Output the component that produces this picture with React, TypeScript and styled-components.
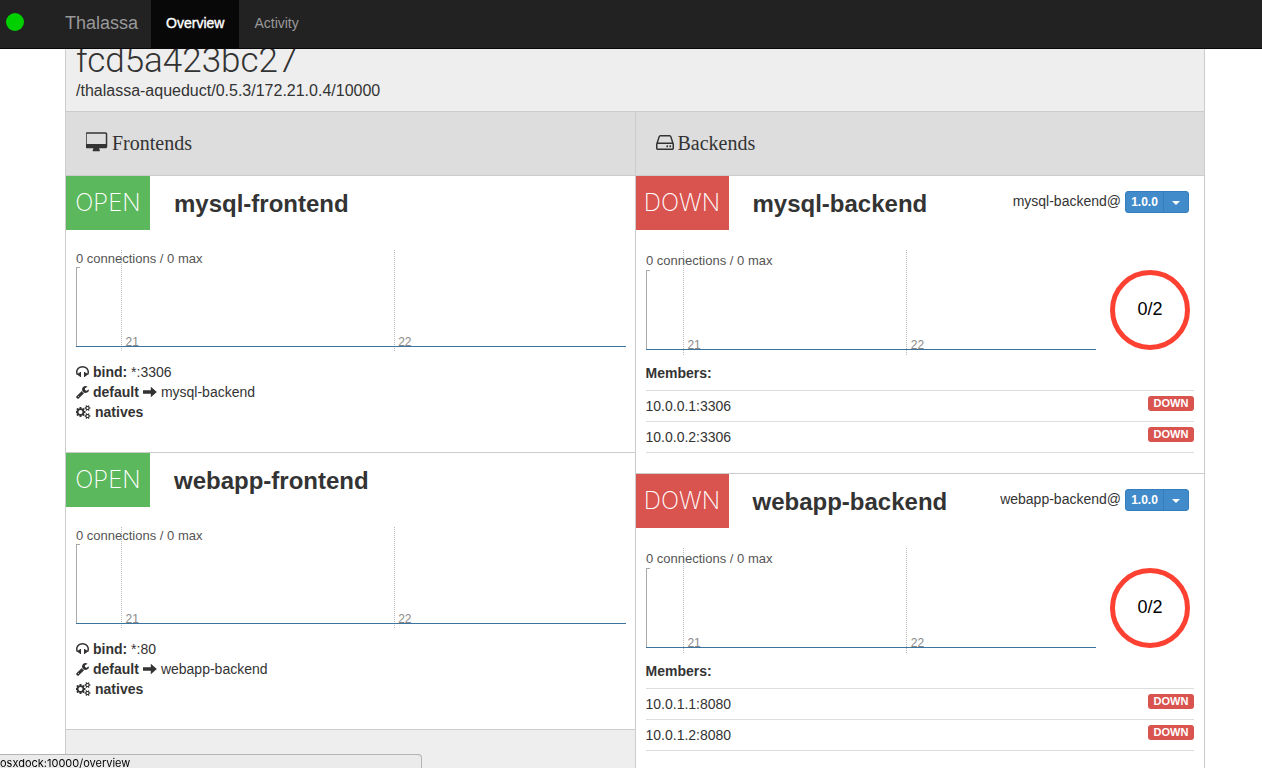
import React from 'react';
import styled, { createGlobalStyle } from 'styled-components';

const sans = '"Liberation Sans", Arial, sans-serif';
const light = 'Roboto, "Liberation Sans", sans-serif';

const GlobalStyle = createGlobalStyle`
  *, *::before, *::after { box-sizing: border-box; }
  html, body { margin: 0; height: 100%; overflow: hidden; }
  body { background: #fff; color: #333; font: 14px/20px ${sans}; }
  h1, h2, h3, h4, p, ul { margin: 0; padding: 0; font-weight: inherit; }
`;

const Navbar = styled.nav`
  position: fixed;
  inset: 0 0 auto 0;
  z-index: 2;
  display: flex;
  align-items: stretch;
  height: 49px;
  background: #222;
  border-bottom: 1px solid #080808;
`;

const StatusSlot = styled.div`
  width: 65px;
  padding: 13px 6px;
`;

const StatusDot = styled.div`
  width: 18px;
  height: 18px;
  border-radius: 50%;
  background: #00d000;
`;

const Brand = styled.a`
  padding: 12px 13px 0 0;
  color: #999;
  font-size: 18px;
  line-height: 22px;
  text-decoration: none;
`;

const NavLink = styled.a<{ $active?: boolean }>`
  padding: 13px 15px 0;
  color: ${p => (p.$active ? '#fff' : '#999')};
  background: ${p => (p.$active ? '#080808' : 'transparent')};
  -webkit-text-stroke: ${p => (p.$active ? '0.4px #fff' : '0')};
  text-decoration: none;
`;

const Page = styled.main`
  padding: 0 57px 0 65px;
`;

const Panel = styled.div`
  background: #eee;
  border: solid #ccc;
  border-width: 0 1px;
`;

const Host = styled.header`
  padding: 41px 10px 10px;
  border-bottom: 1px solid #ccc;
`;

const HostName = styled.h1`
  font: 300 35px/40px ${light};
`;

const HostPath = styled.p`
  font-size: 16px;
  line-height: 20px;
`;

const Columns = styled.div`
  display: flex;
  min-height: 700px;
`;

const Column = styled.section`
  flex: 1 1 0;
  min-width: 0;
  & + & { border-left: 1px solid #ccc; }
`;

const ColumnTitle = styled.h2`
  display: flex;
  align-items: center;
  gap: 4px;
  height: 64px;
  padding: 0 20px 2px;
  background: #ddd;
  border-bottom: 1px solid #ccc;
  font: 20px/24px "Liberation Serif", "Times New Roman", serif;
`;

const Card = styled.article<{ $bottom: number }>`
  padding-bottom: ${p => p.$bottom}px;
  background: #fff;
  border-bottom: 1px solid #ccc;
`;

const CardHead = styled.div`
  display: flex;
  align-items: flex-start;
  height: 54px;
`;

const State = styled.div<{ $down?: boolean }>`
  width: ${p => (p.$down ? 93 : 84)}px;
  height: 54px;
  background: ${p => (p.$down ? '#d9534f' : '#5cb85c')};
  color: #fff;
  font: 200 24px/54px Inter, sans-serif;
  text-align: center;
`;

const Name = styled.h3`
  flex: 1;
  padding: 14px 0 0 24px;
  font-size: 24px;
  font-weight: 700;
  line-height: 28px;
`;

const Version = styled.div`
  display: flex;
  gap: 4px;
  padding: 15px 15px 0 0;
`;

const ButtonGroup = styled.div`
  display: flex;
  height: 22px;
  background: #428bca;
  border: 1px solid #357ebd;
  border-radius: 3px;
`;

const VersionButton = styled.button`
  width: 38px;
  padding: 0;
  border: 0;
  border-right: 1px solid #357ebd;
  background: none;
  color: #fff;
  font: 700 12px/20px ${sans};
`;

const CaretButton = styled.button`
  display: flex;
  align-items: center;
  justify-content: center;
  width: 24px;
  padding: 2px 0 0;
  border: 0;
  background: none;
  &::after {
    content: '';
    border: 4px solid transparent;
    border-top-color: #fff;
    border-bottom: 0;
  }
`;

const Stats = styled.div`
  display: flex;
  justify-content: space-between;
  padding: 20px 9px 0 10px;
`;

const Chart = styled.svg`
  display: block;
  flex: 1;
  min-width: 0;
  font: 13px ${sans};
`;

const Ring = styled.div`
  flex: none;
  width: 80px;
  height: 80px;
  margin: 20px 5px 0 14px;
  border: 5px solid #fc4133;
  border-radius: 50%;
  color: #000;
  font-size: 18px;
  line-height: 68px;
  text-align: center;
`;

const Details = styled.ul`
  padding: 10px 10px 0;
  list-style: none;
`;

const Detail = styled.li`
  display: flex;
  align-items: center;
  gap: 4px;
`;

const Members = styled.table`
  width: calc(100% - 20px);
  margin: 8px 10px 0;
  border-collapse: collapse;
  caption { padding-bottom: 7px; font-weight: 700; text-align: left; }
  tr { border: solid #ddd; border-width: 1px 0; }
  td { height: 31px; padding: 5px 0; vertical-align: top; }
  td:last-child { text-align: right; }
`;

const Label = styled.span`
  display: block;
  width: 46px;
  height: 15px;
  margin-left: auto;
  border-radius: 3px;
  background: #d9534f;
  color: #fff;
  font-size: 11px;
  font-weight: 700;
  line-height: 15px;
  text-align: center;
`;

const StatusBar = styled.div`
  position: fixed;
  left: 0;
  bottom: 0;
  width: 422px;
  height: 14px;
  border: 1px solid #b4b4b4;
  border-width: 1px 1px 0 0;
  border-radius: 0 4px 0 0;
  background: #ebebeb;
  color: #000;
  font: 11px/16px Inter, sans-serif;
`;

/* x and w bound each glyph horizontally; all share a 1792-unit em height. */
const icons = {
  desktop: { x: 0, w: 1920, d: 'M1728 992v-832q0-13-9.5-22.5t-22.5-9.5h-1600q-13 0-22.5 9.5t-9.5 22.5v832q0 13 9.5 22.5t22.5 9.5h1600q13 0 22.5-9.5t9.5-22.5zM1856 160v1088q0 66-47 113t-113 47h-544q0 37 16 77.5t32 71 16 43.5q0 26-19 45t-45 19h-512q-26 0-45-19t-19-45q0-14 16-44t32-70 16-78h-544q-66 0-113-47t-47-113v-1088q0-66 47-113t113-47h1600q66 0 113 47t47 113z' },
  hdd: { x: 128, w: 1536, d: 'M1168 1216q0 33-23.5 56.5t-56.5 23.5-56.5-23.5-23.5-56.5 23.5-56.5 56.5-23.5 56.5 23.5 23.5 56.5zm256 0q0 33-23.5 56.5t-56.5 23.5-56.5-23.5-23.5-56.5 23.5-56.5 56.5-23.5 56.5 23.5 23.5 56.5zm112 160v-320q0-13-9.5-22.5t-22.5-9.5h-1216q-13 0-22.5 9.5t-9.5 22.5v320q0 13 9.5 22.5t22.5 9.5h1216q13 0 22.5-9.5t9.5-22.5zm-1230-480h1180l-157-482q-4-13-16-21.5t-26-8.5h-782q-14 0-26 8.5t-16 21.5zm1358 160v320q0 66-47 113t-113 47h-1216q-66 0-113-47t-47-113v-320q0-25 16-75l197-606q17-53 63-86t101-33h782q55 0 101 33t63 86l197 606q16 50 16 75z' },
  headphones: { x: 64, w: 1664, d: 'M1728 886q0 166-60 314l-20 49-185 33q-22 83-90.5 136.5t-156.5 53.5v32q0 14-9 23t-23 9h-64q-14 0-23-9t-9-23v-576q0-14 9-23t23-9h64q14 0 23 9t9 23v32q71 0 130 35.5t93 95.5l68-12q29-95 29-193 0-148-88-279t-236.5-209-315.5-78-315.5 78-236.5 209-88 279q0 98 29 193l68 12q34-60 93-95.5t130-35.5v-32q0-14 9-23t23-9h64q14 0 23 9t9 23v576q0 14-9 23t-23 9h-64q-14 0-23-9t-9-23v-32q-88 0-156.5-53.5t-90.5-136.5l-185-33-20-49q-60-148-60-314 0-151 67-291t179-242.5 266-163.5 320-61 320 61 266 163.5 179 242.5 67 291z' },
  wrench: { x: 64, w: 1664, d: 'M448 1472q0-26-19-45t-45-19-45 19-19 45 19 45 45 19 45-19 19-45zm644-420l-682 682q-37 37-90 37-52 0-91-37l-106-108q-38-36-38-90 0-53 38-91l681-681q39 98 114.5 173.5t173.5 114.5zm634-435q0 39-23 106-47 134-164.5 217.5t-258.5 83.5q-185 0-316.5-131.5t-131.5-316.5 131.5-316.5 316.5-131.5q58 0 121.5 16.5t107.5 46.5q16 11 16 28t-16 28l-293 169v224l193 107q5-3 79-48.5t135.5-81 70.5-35.5q15 0 23.5 10t8.5 25z' },
  arrow: { x: 0, w: 1792, d: 'M0 680h1000v-454l770 670-770 670v-454h-1000z' },
  cogs: { x: 0, w: 1920, d: 'M832 896q0-106-75-181t-181-75-181 75-75 181 75 181 181 75 181-75 75-181zm768 512q0-52-38-90t-90-38-90 38-38 90q0 53 37.5 90.5t90.5 37.5 90.5-37.5 37.5-90.5zm0-1024q0-52-38-90t-90-38-90 38-38 90q0 53 37.5 90.5t90.5 37.5 90.5-37.5 37.5-90.5zm-384 421v185q0 10-7 19.5t-16 10.5l-155 24q-11 35-32 76 34 48 90 115 7 11 7 20 0 12-7 19-23 30-82.5 89.5t-78.5 59.5q-11 0-21-7l-115-90q-37 19-77 31-11 108-23 155-7 24-30 24h-186q-11 0-20-7.5t-10-17.5l-23-153q-34-10-75-31l-118 89q-7 7-20 7-11 0-21-8-144-133-144-160 0-9 7-19 10-14 41-53t47-61q-23-44-35-82l-152-24q-10-1-17-9.5t-7-19.5v-185q0-10 7-19.5t16-10.5l155-24q11-35 32-76-34-48-90-115-7-11-7-20 0-12 7-20 22-30 82-89t79-59q11 0 21 7l115 90q34-18 77-32 11-108 23-154 7-24 30-24h186q11 0 20 7.5t10 17.5l23 153q34 10 75 31l118-89q8-7 20-7 11 0 21 8 144 133 144 160 0 8-7 19-12 16-42 54t-45 60q23 48 34 82l152 23q10 2 17 10.5t7 19.5zm640 533v140q0 16-149 31-12 27-30 52 51 113 51 138 0 4-4 7-122 71-124 71-8 0-46-47t-52-68q-20 2-30 2t-30-2q-14 21-52 68t-46 47q-2 0-124-71-4-3-4-7 0-25 51-138-18-25-30-52-149-15-149-31v-140q0-16 149-31 13-29 30-52-51-113-51-138 0-4 4-7 4-2 35-20t59-34 30-16q8 0 46 46.5t52 67.5q20-2 30-2t30 2q51-71 92-112l6-2q4 0 124 70 4 3 4 7 0 25-51 138 17 23 30 52 149 15 149 31zm0-1024v140q0 16-149 31-12 27-30 52 51 113 51 138 0 4-4 7-122 71-124 71-8 0-46-47t-52-68q-20 2-30 2t-30-2q-14 21-52 68t-46 47q-2 0-124-71-4-3-4-7 0-25 51-138-18-25-30-52-149-15-149-31v-140q0-16 149-31 13-29 30-52-51-113-51-138 0-4 4-7 4-2 35-20t59-34 30-16q8 0 46 46.5t52 67.5q20-2 30-2t30 2q51-71 92-112l6-2q4 0 124 70 4 3 4 7 0 25-51 138 17 23 30 52 149 15 149 31z' },
};

function Icon({ name, size }: { name: keyof typeof icons; size: number }) {
  const { x, w, d } = icons[name];
  return (
    <svg width={Math.floor((size * w) / 1792)} height={size} viewBox={`${x} 0 ${w} 1792`} fill="#333" aria-hidden="true">
      <path d={d} />
    </svg>
  );
}

/* Connection history: caption, y axis, hour markers and the flat data line. */
function History({ base, caption }: { base: number; caption: number }) {
  return (
    <Chart height={base + 6}>
      {[['8.3%', '21'], ['57.9%', '22']].map(([x, hour]) => (
        <React.Fragment key={hour}>
          <line x1={x} x2={x} y1="0" y2={base + 6} stroke="#bbb" strokeDasharray="1 1" shapeRendering="crispEdges" />
          <text x={x} dx="4" y={base} fontSize="12" fill="#888">{hour}</text>
        </React.Fragment>
      ))}
      <text x="0" y={caption} fill="#555">0 connections / 0 max</text>
      <path d={`M4 ${base - 78.5}H0.5V${base}`} fill="none" stroke="#aaa" shapeRendering="crispEdges" />
      <line x1="0" x2="100%" y1={base + 0.5} y2={base + 0.5} stroke="#3a749f" shapeRendering="crispEdges" />
    </Chart>
  );
}

function Frontend({ name, bind, target }: { name: string; bind: string; target: string }) {
  return (
    <Card $bottom={30}>
      <CardHead>
        <State>OPEN</State>
        <Name>{name}</Name>
      </CardHead>
      <Stats><History base={96} caption={13} /></Stats>
      <Details>
        <Detail><Icon name="headphones" size={14} /><span><b>bind:</b> {bind}</span></Detail>
        <Detail><Icon name="wrench" size={14} /><b>default</b><Icon name="arrow" size={14} />{target}</Detail>
        <Detail><Icon name="cogs" size={14} /><b>natives</b></Detail>
      </Details>
    </Card>
  );
}

function Backend({ name, members }: { name: string; members: string[] }) {
  return (
    <Card $bottom={20}>
      <CardHead>
        <State $down>DOWN</State>
        <Name>{name}</Name>
        <Version>
          <span>{name}@</span>
          <ButtonGroup>
            <VersionButton type="button">1.0.0</VersionButton>
            <CaretButton type="button" aria-label={`Choose version of ${name}`} />
          </ButtonGroup>
        </Version>
      </CardHead>
      <Stats>
        <History base={99} caption={15} />
        <Ring>0/2</Ring>
      </Stats>
      <Members>
        <caption>Members:</caption>
        <tbody>
          {members.map(m => (
            <tr key={m}><td>{m}</td><td><Label>DOWN</Label></td></tr>
          ))}
        </tbody>
      </Members>
    </Card>
  );
}

export default function App() {
  return (
    <>
      <GlobalStyle />
      <Navbar>
        <StatusSlot><StatusDot /></StatusSlot>
        <Brand href="#">Thalassa</Brand>
        <NavLink href="#overview" $active>Overview</NavLink>
        <NavLink href="#activity">Activity</NavLink>
      </Navbar>
      <Page>
        <Panel>
          <Host>
            <HostName>fcd5a423bc27</HostName>
            <HostPath>/thalassa-aqueduct/0.5.3/172.21.0.4/10000</HostPath>
          </Host>
          <Columns>
            <Column>
              <ColumnTitle><Icon name="desktop" size={21} />Frontends</ColumnTitle>
              <Frontend name="mysql-frontend" bind="*:3306" target="mysql-backend" />
              <Frontend name="webapp-frontend" bind="*:80" target="webapp-backend" />
            </Column>
            <Column>
              <ColumnTitle><Icon name="hdd" size={21} />Backends</ColumnTitle>
              <Backend name="mysql-backend" members={['10.0.0.1:3306', '10.0.0.2:3306']} />
              <Backend name="webapp-backend" members={['10.0.1.1:8080', '10.0.1.2:8080']} />
            </Column>
          </Columns>
        </Panel>
      </Page>
      <StatusBar>osxdock:10000/overview</StatusBar>
    </>
  );
}
